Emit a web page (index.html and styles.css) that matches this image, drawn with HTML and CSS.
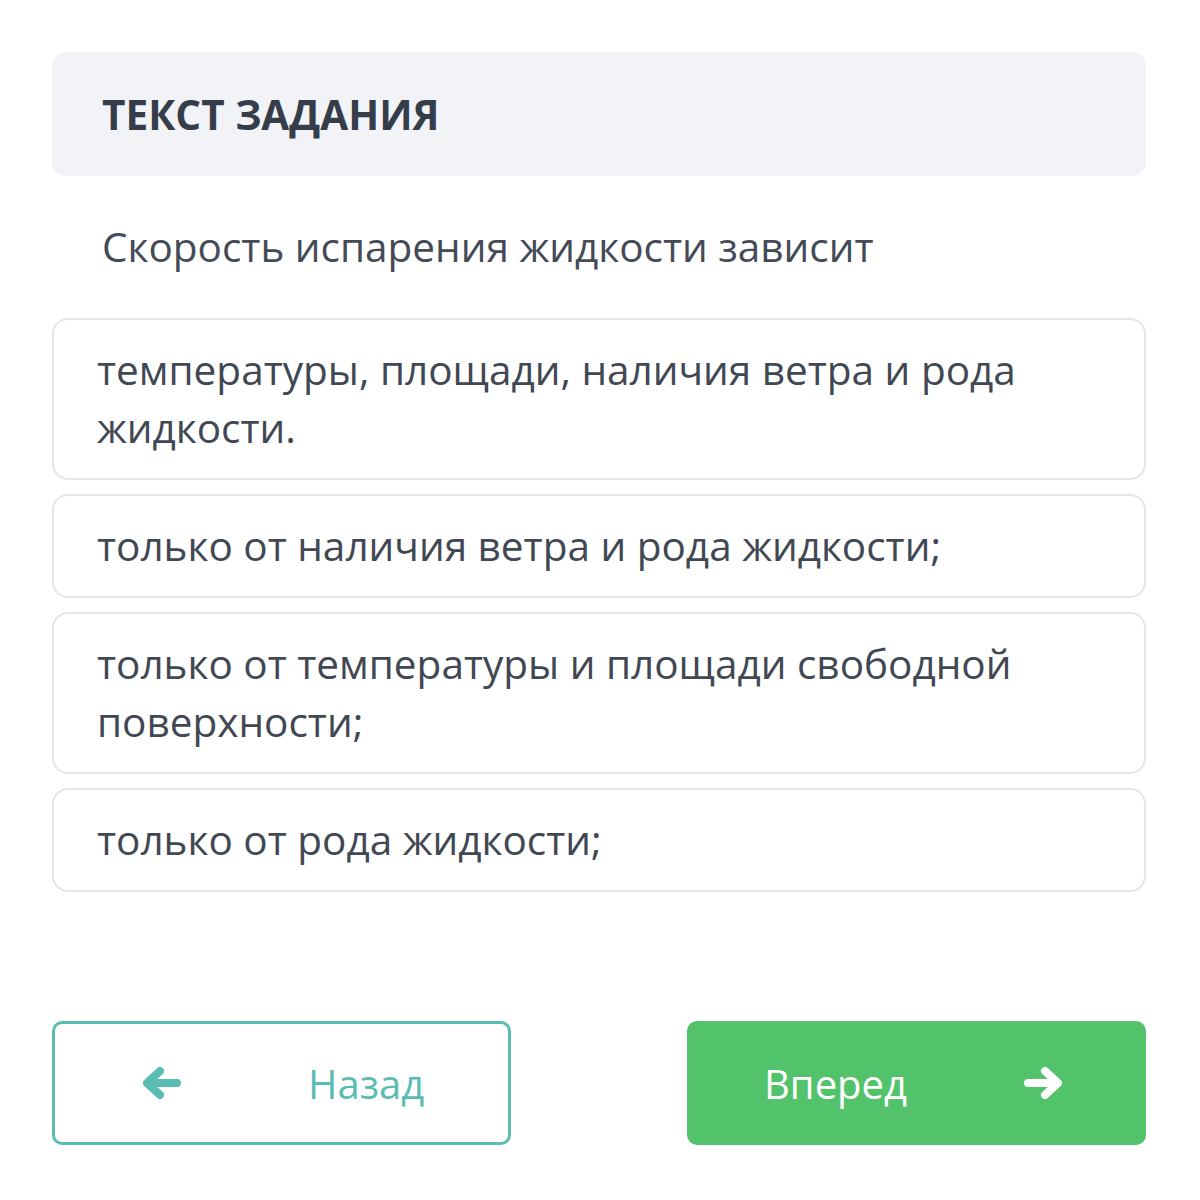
FILE: index.html
```html
<!DOCTYPE html>
<html lang="ru">
  <head>
    <meta charset="UTF-8" />
    <meta name="viewport" content="width=device-width, initial-scale=1.0" />
    <title>Текст задания</title>
    <link rel="stylesheet" href="styles.css">
  </head>
  <body>
    <div class="task">
      <div class="task-header">ТЕКСТ ЗАДАНИЯ</div>

      <p class="question">Скорость испарения жидкости зависит</p>

      <div class="answers">
        <div class="answer">температуры, площади, наличия ветра и рода жидкости.</div>
        <div class="answer">только от наличия ветра и рода жидкости;</div>
        <div class="answer">только от температуры и площади свободной поверхности;</div>
        <div class="answer">только от рода жидкости;</div>
      </div>

      <div class="nav">
        <button class="btn btn-back">
          <svg class="arrow" viewBox="0 0 40 36" width="40" height="36">
            <path d="M36 18H8M19 6L6 18l13 12" fill="none" stroke="currentColor" stroke-width="8" stroke-linecap="round" stroke-linejoin="round"/>
          </svg>
          <span class="btn-label">Назад</span>
        </button>
        <button class="btn btn-next">
          <span class="btn-label">Вперед</span>
          <svg class="arrow" viewBox="0 0 40 36" width="40" height="36">
            <path d="M4 18h28M21 6l13 12-13 12" fill="none" stroke="currentColor" stroke-width="8" stroke-linecap="round" stroke-linejoin="round"/>
          </svg>
        </button>
      </div>
    </div>
  </body>
</html>
```

FILE: styles.css
```css
body {
  margin: 0;
  padding: 52px 54px 52px 52px;
  font-family: "Open Sans", "Noto Sans", sans-serif;
  background: #fff;
  color: #444b57;
}

.task {
  display: flex;
  flex-direction: column;
}

/* Заголовок */
.task-header {
  background: #f1f3f6;
  border-radius: 14px;
  height: 124px;
  padding-left: 50px;
  display: flex;
  align-items: center;
  font-size: 40.5px;
  font-weight: 700;
  color: #353d4a;
}

.question {
  margin: 0;
  padding: 42px 0 42px 50px;
  font-size: 40.5px;
  line-height: 58px;
}

/* Варианты ответа */
.answers {
  display: flex;
  flex-direction: column;
  gap: 14px;
}

.answer {
  border: 2px solid #e3e5e9;
  border-radius: 16px;
  padding: 21px 44px 21px 43px;
  font-size: 40.5px;
  line-height: 58px;
  color: #414854;
}

/* Кнопки */
.nav {
  display: flex;
  justify-content: space-between;
  margin-top: 129px;
}

.btn {
  width: 459px;
  height: 124px;
  border-radius: 10px;
  font-family: inherit;
  font-size: 40px;
  display: flex;
  align-items: center;
  box-sizing: border-box;
  padding: 0;
}

.btn-back {
  background: #fff;
  border: 3px solid #5bbcb4;
  color: #5bbcb4;
}

.btn-back .arrow {
  margin-left: 86px;
}

.btn-back .btn-label {
  margin-left: 127px;
}

.btn-next {
  background: #52c26b;
  border: none;
  color: #fff;
}

.btn-next .btn-label {
  margin-left: 77px;
}

.btn-next .arrow {
  margin-left: 117px;
}
```
